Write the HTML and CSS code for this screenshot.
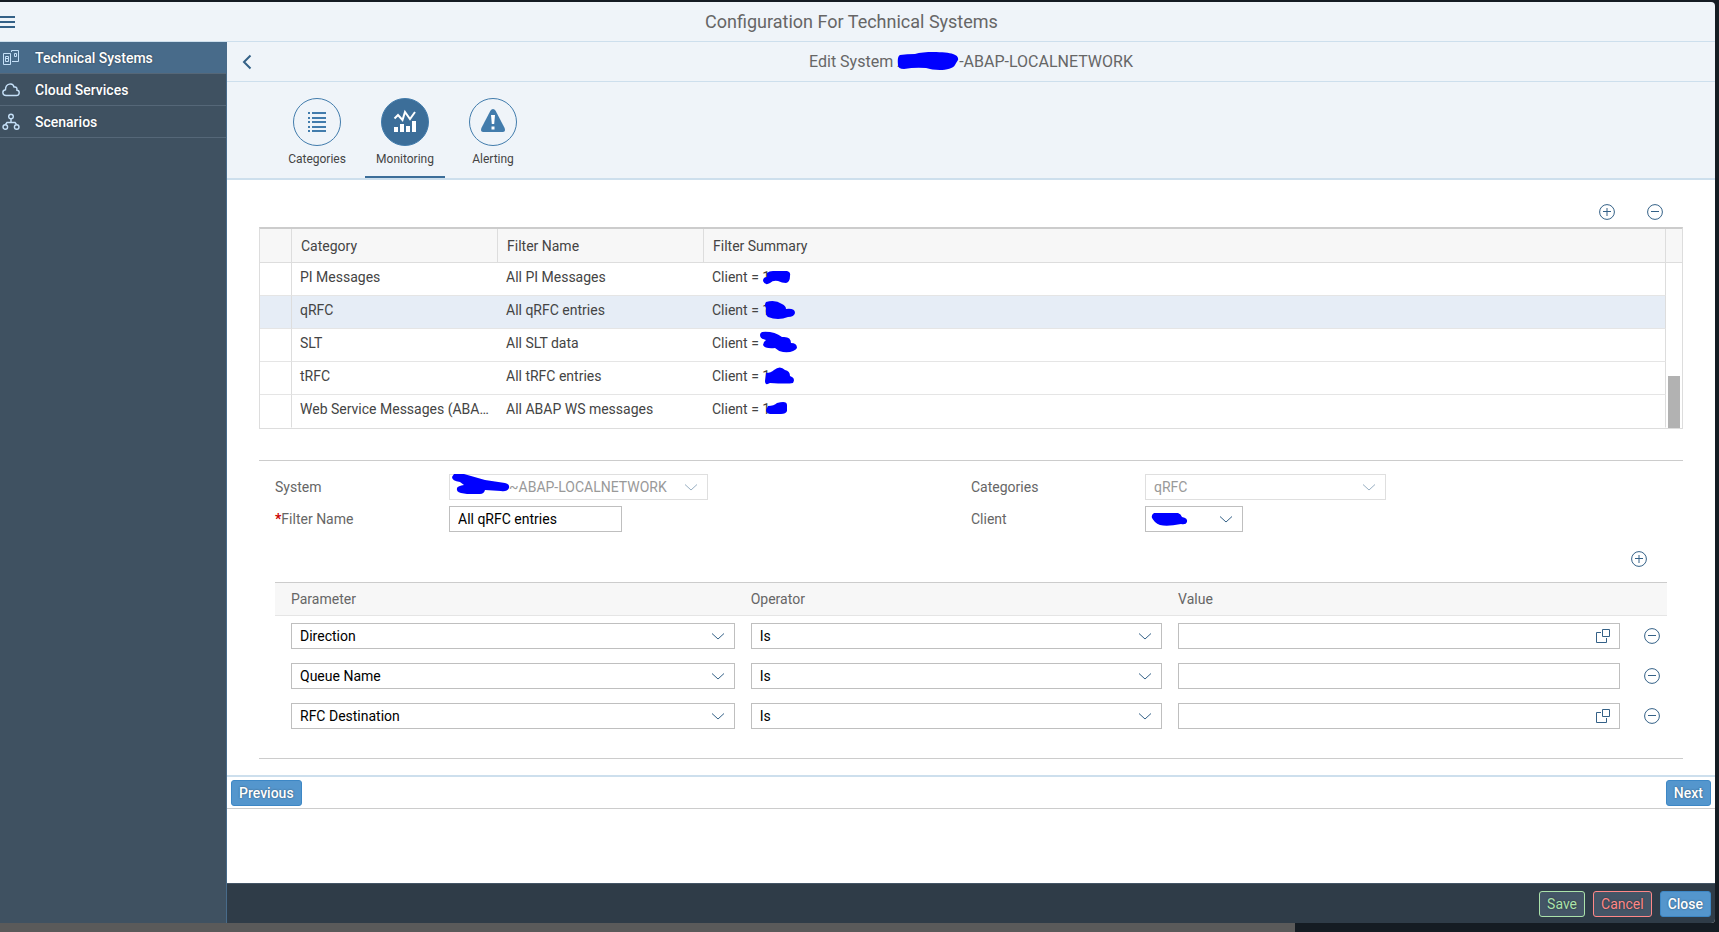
FILE: index.html
```html
<!DOCTYPE html>
<html lang="en">
<head>
    <meta charset="UTF-8">
    <meta name="viewport" content="width=device-width, initial-scale=1.0">
    <title>Configuration For Technical Systems</title>
    <link rel="stylesheet" href="styles.css">
</head>
<body>

<!-- shared icons -->
<svg class="sprite" aria-hidden="true">
    <symbol id="icon-add" viewBox="0 0 16 16"><circle cx="8" cy="8" r="7.4"/><path d="M4 7.5h8M8 4v8"/></symbol>
    <symbol id="icon-remove" viewBox="0 0 16 16"><circle cx="8" cy="8" r="7.4"/><path d="M4 7.5h8"/></symbol>
    <symbol id="icon-arrow" viewBox="0 0 12 7"><path d="M0 .5l6 5.5 6-5.5"/></symbol>
    <symbol id="icon-help" viewBox="0 0 16 16"><path d="M7.5 1.5h7v7h-7zM6 4.500H1.500v10h10V10"/></symbol>
</svg>

<div class="dialog">
    <header class="dialog-header">
        <button class="icon-button menu-button" aria-label="Menu">
            <svg width="16" height="12" viewBox="0 0 16 12"><path d="M0 1h15M0 6h15M0 11h15"/></svg>
        </button>
        <h1>Configuration For Technical Systems</h1>
    </header>

    <div class="dialog-body">
        <nav class="sidebar">
            <a href="#" class="active">
                <svg viewBox="0 0 18 18"><path d="M1.500 4.500h7v11h-7zM3.500 7.500h3v5h-3zM4 9.500h2M10 12.500h6.500v-11h-7V3M12.500 4.500h2v3h-2z"/></svg>
                Technical Systems
            </a>
            <a href="#">
                <svg class="medium" viewBox="0 0 18 18"><path d="M4 14.500C0 14.500-.2 9.200 3.500 8.700 3.500 2 11 1.500 12 6c3-.5 3.200 1.800 2.800 3C18.500 9.800 17.500 14.500 14.500 14.500z"/></svg>
                Cloud Services
            </a>
            <a href="#">
                <svg class="medium" viewBox="0 0 18 18"><circle cx="9" cy="3.500" r="2.300"/><circle cx="3.300" cy="14" r="2.300"/><circle cx="14.700" cy="14" r="2.300"/><path d="M9 6v3.500M3.500 11.500L5 9.500h8l1.500 2"/></svg>
                Scenarios
            </a>
        </nav>

        <main class="page">
            <div class="page-header">
                <button class="icon-button back-button" aria-label="Back">
                    <svg width="10" height="16" viewBox="0 0 10 16"><path d="M8.500 1.500L2 8l6.500 6.500"/></svg>
                </button>
                <h2>Edit System <span class="redacted title-redacted">A<svg viewBox="0 0 62 18"><path d="M3 3Q10 2 18 2C28-1 50 0 56 2Q62 4 61 8Q59 11 58 13C55 19 38 19 29 16Q18 15 7 17Q1 17 1 13Q0 4 3 3z"/></svg></span>-ABAP-LOCALNETWORK</h2>
            </div>

            <div class="tabs">
                <button class="tab">
                    <span class="tab-icon">
                        <svg viewBox="0 0 24 24"><path class="fill" d="M3 2h2v2H3zM3 7h2v2H3zM3 11h2v2H3zM3 16h2v2H3zM3 20h2v2H3zM7 2h14v2H7zM7 7h14v2H7zM7 11h14v2H7zM7 16h14v2H7zM7 20h14v2H7z"/></svg>
                    </span>
                    Categories
                </button>
                <button class="tab selected">
                    <span class="tab-icon">
                        <svg viewBox="0 0 24 24"><path class="fill" d="M1 17h4v5H1zM7 14h4v8H7zM13 16h4v6h-4zM19 11h4v11h-4z"/><path class="line" d="M1.500 8.500L5 5l4.500 5L12 2l5 7 5-7"/></svg>
                    </span>
                    Monitoring
                </button>
                <button class="tab">
                    <span class="tab-icon">
                        <svg viewBox="0 0 24 24"><path class="fill" d="M12-1q1.600 0 2.600 1.800L23.600 18q1.400 4-2 4H2.400q-3.400 0-2-4L9.400.800Q10.400-1 12-1z"/><path class="mark" d="M10 5h4l-.8 9h-2.400zM10.500 16.500h3v3h-3z"/></svg>
                    </span>
                    Alerting
                </button>
            </div>

            <section class="content">
                <div class="toolbar">
                    <button class="icon-button" aria-label="Add filter"><svg class="icon"><use href="#icon-add"/></svg></button>
                    <button class="icon-button" aria-label="Remove filter"><svg class="icon"><use href="#icon-remove"/></svg></button>
                </div>

                <div class="filter-list">
                    <table class="filter-table">
                        <colgroup>
                            <col class="col-select">
                            <col class="col-name">
                            <col class="col-name">
                            <col>
                        </colgroup>
                        <thead>
                            <tr>
                                <th></th>
                                <th>Category</th>
                                <th>Filter Name</th>
                                <th>Filter Summary</th>
                            </tr>
                        </thead>
                        <tbody>
                            <tr>
                                <td></td>
                                <td>PI Messages</td>
                                <td>All PI Messages</td>
                                <td>Client = <span class="redacted">1<svg viewBox="0 0 40 24"><path d="M9 8Q11 6 15 6H29Q33 7 32 11Q32 17 28 18Q24 18 20 16Q15 15 12 18Q7 21 5 16Q5 12 9 12z"/></svg></span></td>
                            </tr>
                            <tr class="current">
                                <td></td>
                                <td>qRFC</td>
                                <td>All qRFC entries</td>
                                <td>Client = <span class="redacted">1<svg viewBox="0 0 40 24"><path d="M8 4Q17 1 24 6Q28 8 28 11Q37 10 37 15Q36 19 30 19Q20 23 10 19Q7 17 8 10Q6 7 8 4z"/></svg></span></td>
                            </tr>
                            <tr>
                                <td></td>
                                <td>SLT</td>
                                <td>All SLT data</td>
                                <td>Client = <span class="redacted"><span class="hidden-digit">1</span><svg viewBox="0 0 40 24"><path d="M4 1Q16 0 24 6Q33 5 33 12Q39 12 39 17Q36 22 25 21Q20 20 17 17Q7 18 5 14Q5 11 8 9Q2 8 2 4Q2 2 4 1z"/></svg></span></td>
                            </tr>
                            <tr>
                                <td></td>
                                <td>tRFC</td>
                                <td>All tRFC entries</td>
                                <td>Client = <span class="redacted">1<svg viewBox="0 0 40 24"><path d="M8 9Q13 9 16 6Q22 1 27 6Q32 7 32 12Q38 14 35 19Q30 20 12 19Q7 22 7 17z"/></svg></span></td>
                            </tr>
                            <tr>
                                <td></td>
                                <td>Web Service Messages (ABAP)</td>
                                <td>All ABAP WS messages</td>
                                <td>Client = <span class="redacted">1<svg viewBox="0 0 40 24"><path d="M10 9Q16 9 19 6Q29 3 29 8V14Q28 17 23 17H12Q8 16 8 13z"/></svg></span></td>
                            </tr>
                        </tbody>
                    </table>
                    <div class="scrollbar"><div class="thumb"></div></div>
                </div>

                <div class="details">
                    <div class="form">
                        <label for="system">System</label>
                        <div class="field system-field disabled">
                            <select id="system" disabled><option>~ABAP-LOCALNETWORK</option></select>
                            <svg class="arrow"><use href="#icon-arrow"/></svg>
                            <svg class="scribble" viewBox="0 0 64 24"><path d="M5 0H15L36 6L56 9Q61 10 60 14Q58 18 52 17L36 16Q35 20 31 20H18L12 19Q7 18 8 14Q9 12 15 11L11 8Q3 7 3 3z"/></svg>
                        </div>
                        <label for="categories">Categories</label>
                        <div class="field categories-field disabled">
                            <select id="categories" disabled><option>qRFC</option></select>
                            <svg class="arrow"><use href="#icon-arrow"/></svg>
                        </div>
                        <label for="filterName"><span class="required">*</span>Filter Name</label>
                        <div class="field name-field">
                            <input type="text" id="filterName" value="All qRFC entries">
                        </div>
                        <label for="client">Client</label>
                        <div class="field client-field">
                            <select id="client"><option></option></select>
                            <svg class="arrow"><use href="#icon-arrow"/></svg>
                            <svg class="scribble" viewBox="0 0 64 24"><path d="M9 7H33Q36 8 37 11Q43 12 42 16Q41 19 36 18Q22 21 15 19Q12 18 10 16Q4 10 9 7z"/></svg>
                        </div>
                    </div>

                    <div class="toolbar parameter-toolbar">
                        <button class="icon-button" aria-label="Add parameter"><svg class="icon"><use href="#icon-add"/></svg></button>
                    </div>

                    <table class="parameter-table">
                        <colgroup>
                            <col class="col-parameter">
                            <col class="col-operator">
                            <col>
                            <col class="col-action">
                        </colgroup>
                        <thead>
                            <tr>
                                <th>Parameter</th>
                                <th>Operator</th>
                                <th>Value</th>
                                <th></th>
                            </tr>
                        </thead>
                        <tbody>
                            <tr>
                                <td><div class="field"><select aria-label="Parameter"><option>Direction</option></select><svg class="arrow"><use href="#icon-arrow"/></svg></div></td>
                                <td><div class="field"><select aria-label="Operator"><option>Is</option></select><svg class="arrow"><use href="#icon-arrow"/></svg></div></td>
                                <td><div class="field"><input type="text" aria-label="Value"><svg class="value-help"><use href="#icon-help"/></svg></div></td>
                                <td><button class="icon-button" aria-label="Remove"><svg class="icon"><use href="#icon-remove"/></svg></button></td>
                            </tr>
                            <tr>
                                <td><div class="field"><select aria-label="Parameter"><option>Queue Name</option></select><svg class="arrow"><use href="#icon-arrow"/></svg></div></td>
                                <td><div class="field"><select aria-label="Operator"><option>Is</option></select><svg class="arrow"><use href="#icon-arrow"/></svg></div></td>
                                <td><div class="field"><input type="text" aria-label="Value"></div></td>
                                <td><button class="icon-button" aria-label="Remove"><svg class="icon"><use href="#icon-remove"/></svg></button></td>
                            </tr>
                            <tr>
                                <td><div class="field"><select aria-label="Parameter"><option>RFC Destination</option></select><svg class="arrow"><use href="#icon-arrow"/></svg></div></td>
                                <td><div class="field"><select aria-label="Operator"><option>Is</option></select><svg class="arrow"><use href="#icon-arrow"/></svg></div></td>
                                <td><div class="field"><input type="text" aria-label="Value"><svg class="value-help"><use href="#icon-help"/></svg></div></td>
                                <td><button class="icon-button" aria-label="Remove"><svg class="icon"><use href="#icon-remove"/></svg></button></td>
                            </tr>
                        </tbody>
                    </table>
                </div>
            </section>

            <div class="step-bar">
                <button class="btn btn-primary">Previous</button>
                <button class="btn btn-primary">Next</button>
            </div>

            <footer class="page-footer">
                <button class="btn btn-save">Save</button>
                <button class="btn btn-cancel">Cancel</button>
                <button class="btn btn-primary">Close</button>
            </footer>
        </main>
    </div>
</div>

<div class="backdrop-strip"></div>

</body>
</html>
```
FILE: styles.css
```css
* {
    box-sizing: border-box;
}

body {
    display: flex;
    flex-direction: column;
    min-height: 100vh;
    margin: 0;
    padding: 2px 4px 0 0;
    background-color: #151c23;
    color: #444;
    font-family: Roboto, Arial, sans-serif;
    font-size: 14px;
}

button, input, select {
    font-family: inherit;
    font-size: 14px;
}

svg {
    fill: none;
    stroke: #346187;
}

.sprite {
    position: absolute;
    width: 0;
    height: 0;
}

.icon {
    display: block;
    width: 16px;
    height: 16px;
}

.icon-button {
    padding: 0;
    border: none;
    background: none;
    cursor: pointer;
}

/* Dialog */

.dialog {
    flex: 1;
    display: flex;
    flex-direction: column;
    border-radius: 0 4px 4px 0;
    overflow: hidden;
}

.dialog-header {
    display: flex;
    align-items: center;
    height: 40px;
    padding-right: 28px;
    background-color: #eff4f9;
    border-bottom: 1px solid #cddfed;
}

.menu-button svg {
    display: block;
    stroke-width: 2;
}

.dialog-header h1 {
    flex: 1;
    margin: 0;
    color: #666;
    font-size: 18px;
    font-weight: normal;
    line-height: 36px;
    text-align: center;
}

.dialog-body {
    flex: 1;
    display: flex;
}

.backdrop-strip {
    width: 75.5%;
    height: 9px;
    background-color: #5a5a5a;
}

/* Sidebar */

.sidebar {
    width: 227px;
    flex-shrink: 0;
    background-color: #3f5161;
    border-right: 1px solid #486b8a;
}

.sidebar a {
    display: flex;
    align-items: center;
    height: 32px;
    padding-left: 2px;
    gap: 15px;
    border-bottom: 1px solid #556778;
    color: #fff;
    font-weight: 500;
    text-decoration: none;
    text-shadow: 0 0 2px #2d3b48;
}

.sidebar a.active {
    background-color: #486b8a;
}

.sidebar svg {
    width: 18px;
    height: 18px;
    stroke: #c4dff7;
    stroke-width: 1;
}

.sidebar svg.medium {
    stroke-width: 1.4;
}

/* Page */

.page {
    flex: 1;
    display: flex;
    flex-direction: column;
    min-width: 0;
    background-color: #fff;
}

.page-header {
    display: flex;
    align-items: center;
    height: 40px;
    padding: 0 25px 0 15px;
    background-color: #eff4f9;
    border-bottom: 1px solid #cddfed;
}

.back-button svg {
    display: block;
    stroke-width: 2;
}

.page-header h2 {
    flex: 1;
    margin: 0;
    color: #666;
    font-size: 16px;
    font-weight: normal;
    text-align: center;
}

.redacted {
    position: relative;
}

.redacted svg {
    position: absolute;
    top: -4px;
    left: -4px;
    width: 40px;
    height: 24px;
    fill: #00f;
    stroke: none;
}

.hidden-digit {
    visibility: hidden;
}

.title-redacted {
    display: inline-block;
    width: 62px;
    text-align: left;
}

.title-redacted svg {
    top: 0;
    left: 0;
    width: 62px;
    height: 18px;
}

/* Tabs */

.tabs {
    display: flex;
    gap: 8px;
    height: 98px;
    padding-left: 50px;
    background-color: #eff4f9;
    border-bottom: 2px solid #cddfed;
}

.tab {
    display: flex;
    flex-direction: column;
    align-items: center;
    gap: 6px;
    width: 80px;
    padding: 16px 0 0;
    border: none;
    border-bottom: 2px solid transparent;
    background: none;
    color: #444;
    font-size: 12px;
    cursor: pointer;
}

.tab.selected {
    border-bottom-color: #3c6e99;
}

.tab-icon {
    display: flex;
    align-items: center;
    justify-content: center;
    width: 48px;
    height: 48px;
    border: 1px solid #427cac;
    border-radius: 50%;
}

.tab-icon svg {
    width: 24px;
    height: 24px;
    stroke: none;
    overflow: visible;
}

.tab-icon .fill {
    fill: #427cac;
}

.tab-icon .mark {
    fill: #fff;
}

.tab.selected .tab-icon {
    background-color: #3c6e99;
}

.tab.selected .fill {
    fill: #fff;
}

.tab.selected .line {
    stroke: #fff;
    stroke-width: 2;
}

/* Filter list */

.content {
    padding: 16px 32px;
}

.toolbar {
    display: flex;
    justify-content: flex-end;
    align-items: center;
    gap: 32px;
    height: 31px;
    padding-right: 20px;
}

.filter-list {
    display: flex;
    border-top: 2px solid #ccc;
    border-left: 1px solid #ddd;
    border-right: 1px solid #ddd;
    border-bottom: 1px solid #ddd;
}

.filter-table {
    flex: 1;
    width: 100%;
    table-layout: fixed;
    border-collapse: separate;
    border-spacing: 0;
}

.col-select {
    width: 32px;
}

.col-name {
    width: 206px;
}

.filter-table th {
    height: 34px;
    padding: 0 9px;
    background-color: #f7f7f7;
    border-right: 1px solid #ddd;
    border-bottom: 1px solid #ddd;
    font-weight: normal;
    text-align: left;
}

.filter-table td {
    height: 33px;
    padding: 0 8px 4px;
    border-bottom: 1px solid #e5e5e5;
    overflow: hidden;
    text-overflow: ellipsis;
    white-space: nowrap;
}

.filter-table td:first-child,
.filter-table td:last-child {
    border-right: 1px solid #ddd;
}

.filter-table tr:last-child td {
    border-bottom-color: #fff;
}

.filter-table .current td {
    background-color: #e6edf6;
}

.scrollbar {
    display: flex;
    flex-direction: column;
    justify-content: flex-end;
    width: 16px;
    padding: 0 2px;
    background: linear-gradient(#f7f7f7 33px, #ddd 33px, #ddd 34px, #fff 34px);
}

.thumb {
    height: 52px;
    background-color: #b2b2b2;
}

/* Filter details */

.details {
    margin-top: 31px;
    padding: 13px 16px 22px;
    border-top: 1px solid #ccc;
    border-bottom: 1px solid #ccc;
}

.form {
    display: grid;
    grid-template-columns: 1fr 3fr 1fr 3fr;
    row-gap: 6px;
    align-items: center;
}

.form label {
    color: #666;
}

.required {
    color: #c00;
    font-weight: bold;
}

.field {
    position: relative;
    height: 26px;
}

.field input,
.field select {
    display: block;
    width: 100%;
    height: 26px;
    padding: 0 8px;
    border: 1px solid #bfbfbf;
    border-radius: 0;
    background-color: #fff;
    color: #000;
    appearance: none;
}

.field.disabled select {
    border-color: #dfdfdf;
    color: #999;
    opacity: 1;
}

.system-field {
    width: 259px;
}

.system-field select {
    padding-left: 59px;
}

.categories-field {
    width: 241px;
}

.name-field {
    width: 173px;
}

.client-field {
    width: 98px;
}

.arrow {
    position: absolute;
    top: 10px;
    right: 11px;
    width: 12px;
    height: 7px;
    pointer-events: none;
}

.disabled .arrow {
    opacity: 0.5;
}

.scribble {
    position: absolute;
    top: 0;
    left: 0;
    width: 64px;
    height: 24px;
    fill: #00f;
    stroke: none;
    pointer-events: none;
}

.value-help {
    position: absolute;
    top: 5px;
    right: 9px;
    width: 16px;
    height: 16px;
}

.parameter-toolbar {
    height: 50px;
    padding-top: 4px;
}

.parameter-table {
    width: 100%;
    table-layout: fixed;
    border-spacing: 0;
    border-top: 1px solid #ccc;
}

.col-parameter {
    width: 33.6%;
}

.col-operator {
    width: 30.7%;
}

.col-action {
    width: 39px;
}

.parameter-table th {
    height: 33px;
    padding: 0 8px;
    background-color: #f7f7f7;
    border-bottom: 1px solid #e5e5e5;
    color: #666;
    font-weight: normal;
    text-align: left;
}

.parameter-table td {
    height: 40px;
    padding: 0 8px;
}

.parameter-table th:first-child,
.parameter-table td:first-child {
    padding-left: 16px;
}

.parameter-table td:last-child {
    padding-left: 16px;
    padding-right: 0;
}

.parameter-table .icon-button {
    display: block;
}

/* Bottom bars */

.step-bar {
    display: flex;
    justify-content: space-between;
    padding: 3px 4px 2px;
    border-top: 2px solid #cddfed;
    border-bottom: 1px solid #ccc;
}

.page-footer {
    display: flex;
    align-items: center;
    justify-content: flex-end;
    gap: 8px;
    height: 40px;
    margin-top: auto;
    padding-right: 4px;
    background-color: #2f3c48;
    border-top: 1px solid #445566;
}

.btn {
    height: 26px;
    padding: 0 7px;
    border: 1px solid #427cac;
    border-radius: 3px;
    cursor: pointer;
    text-shadow: 0 0 2px rgba(0, 0, 0, 0.5);
}

.btn-primary {
    background-color: #5496cd;
    border-color: #3d87c5;
    color: #fff;
    font-weight: 500;
}

.btn-save {
    background-color: #445566;
    border-color: #abe2ab;
    color: #abe2ab;
}

.btn-cancel {
    background-color: #445566;
    border-color: #ff8888;
    color: #ff8888;
}
```
